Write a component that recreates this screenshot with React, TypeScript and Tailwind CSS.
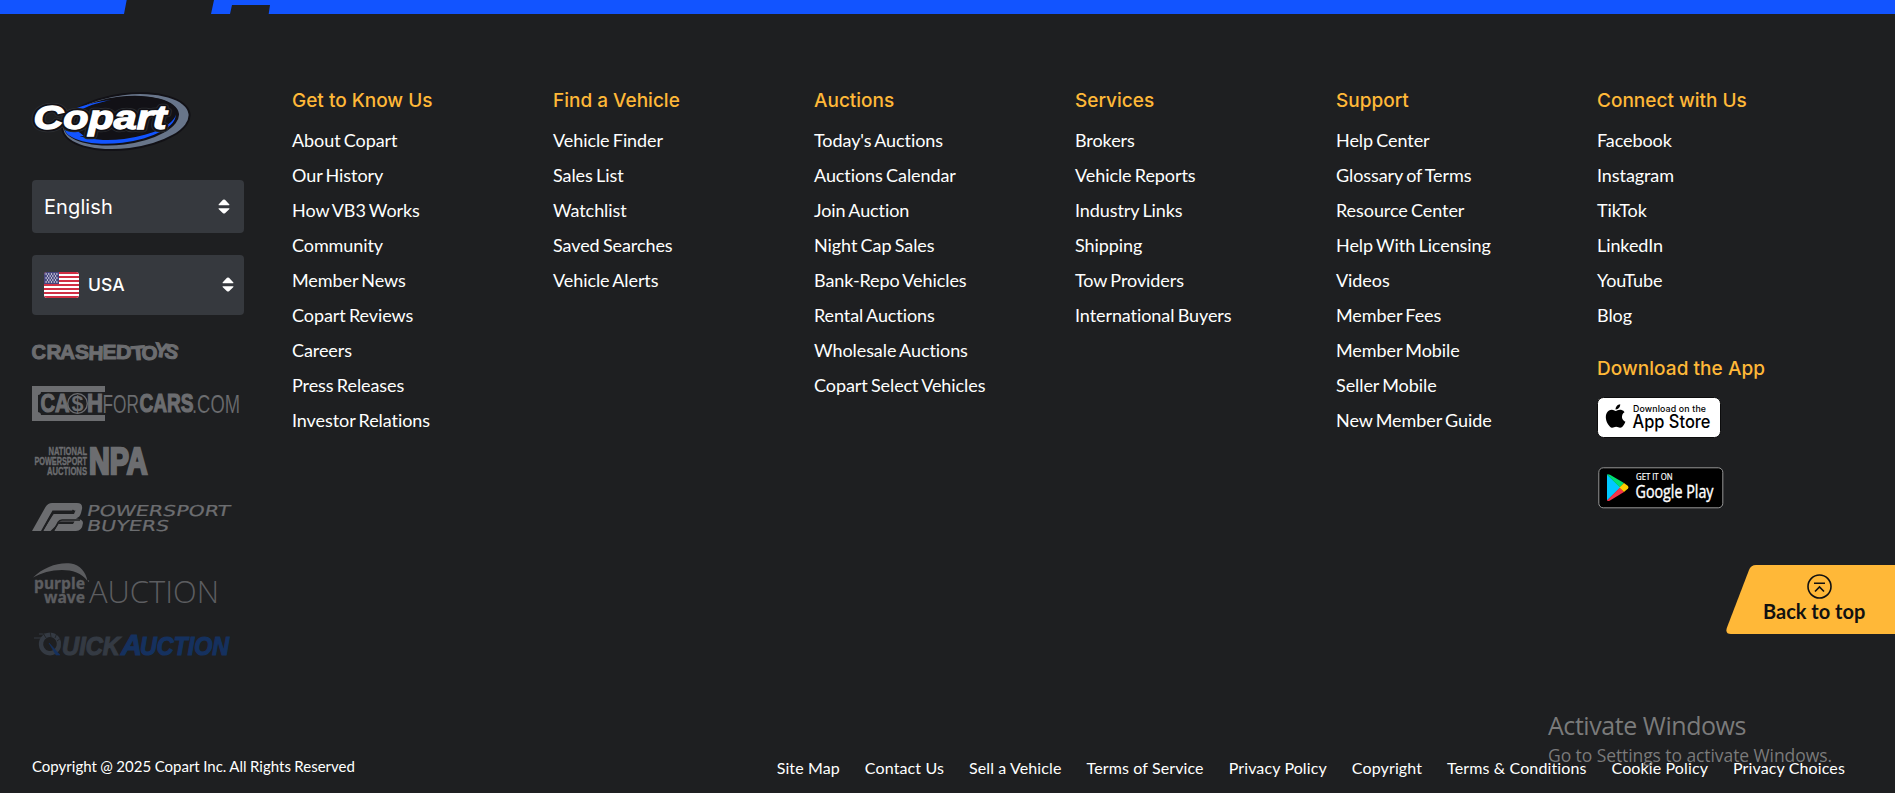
import React from "react";

type Column = { title: string; links: string[] };

const columns: Column[] = [
  {
    title: "Get to Know Us",
    links: ["About Copart", "Our History", "How VB3 Works", "Community", "Member News", "Copart Reviews", "Careers", "Press Releases", "Investor Relations"],
  },
  { title: "Find a Vehicle", links: ["Vehicle Finder", "Sales List", "Watchlist", "Saved Searches", "Vehicle Alerts"] },
  {
    title: "Auctions",
    links: ["Today's Auctions", "Auctions Calendar", "Join Auction", "Night Cap Sales", "Bank-Repo Vehicles", "Rental Auctions", "Wholesale Auctions", "Copart Select Vehicles"],
  },
  { title: "Services", links: ["Brokers", "Vehicle Reports", "Industry Links", "Shipping", "Tow Providers", "International Buyers"] },
  {
    title: "Support",
    links: ["Help Center", "Glossary of Terms", "Resource Center", "Help With Licensing", "Videos", "Member Fees", "Member Mobile", "Seller Mobile", "New Member Guide"],
  },
  { title: "Connect with Us", links: ["Facebook", "Instagram", "TikTok", "LinkedIn", "YouTube", "Blog"] },
];

const legal = ["Site Map", "Contact Us", "Sell a Vehicle", "Terms of Service", "Privacy Policy", "Copyright", "Terms & Conditions", "Cookie Policy", "Privacy Choices"];

const heading = "font-['Inter',sans-serif] text-[19px] leading-6 font-medium text-[#ffb838] whitespace-nowrap";

function CopartLogo() {
  return (
    <svg width="166" height="62" viewBox="30 90 166 62" className="-ml-0.5 block">
      <g transform="rotate(-7 127 121.5)">
        <ellipse cx="126" cy="121.5" rx="65" ry="28.6" fill="#121116" />
        <ellipse cx="126" cy="121.5" rx="63" ry="26.6" fill="#68758a" />
        <ellipse cx="121.5" cy="120" rx="58" ry="24" fill="#121116" />
        <ellipse cx="120" cy="120.5" rx="56" ry="21.5" fill="#1254ff" />
        <ellipse cx="122" cy="117.500" rx="55" ry="21" fill="#121116" />
      </g>
      <path d="M66 122C72 112 90 104 111 100C92 102 74 108 66 113L64 125L72 136L84 136Z" fill="#1254ff" />
      <g fontFamily="'Liberation Sans', sans-serif" fontWeight="700" fontStyle="italic" fontSize="34">
        <text x="33.5" y="129.3" textLength="133" lengthAdjust="spacingAndGlyphs" fill="#121116" stroke="#2b2d31" strokeWidth="6.5" strokeLinejoin="round">Copart</text>
        <text x="33.5" y="129.3" textLength="133" lengthAdjust="spacingAndGlyphs" fill="#121116" stroke="#121116" strokeWidth="5" strokeLinejoin="round" aria-hidden>Copart</text>
        <text x="33.5" y="129.3" textLength="133" lengthAdjust="spacingAndGlyphs" fill="#fff" stroke="#fff" strokeWidth="1.3" aria-hidden>Copart</text>
      </g>
    </svg>
  );
}

function Sorter() {
  return (
    <svg width="12" height="16" viewBox="0 0 12 16" fill="#fff">
      <path d="M1 6.2Q0 6.2 .8 5.2L5 .8Q6 0 7 .8L11.2 5.2Q12 6.2 11 6.2ZM1 9.2Q0 9.2 .8 10.2L5 14.2Q6 15 7 14.2L11.2 10.2Q12 9.2 11 9.2Z" />
    </svg>
  );
}

function Flag() {
  const stars: [number, number][] = [];
  for (let r = 0; r < 5; r++) for (let c = 0; c < 5 - (r % 2); c++) stars.push([2.1 + c * 2.7 + (r % 2) * 1.35, 2 + r * 2]);
  return (
    <svg width="35" height="26" viewBox="0 0 35 26" className="rounded-[3px]">
      <rect width="35" height="26" fill="#fff" />
      {[0, 1, 2, 3, 4, 5, 6].map((i) => (
        <rect key={i} y={i * 4} width="35" height="2" fill="#d02f44" />
      ))}
      <rect width="15" height="12" fill="#46467f" />
      {stars.map(([x, y], i) => (
        <circle key={i} cx={x} cy={y} r="0.7" fill="#fff" />
      ))}
    </svg>
  );
}

function CrashedToys() {
  const letters: [string, number, number, number, number][] = [
    ["C", 31.5, 359, 0, 14.5], ["R", 46.5, 359, 0, 15], ["A", 60, 359, 0, 15], ["S", 75, 359, 0, 14], ["H", 88.5, 360, 2, 15], ["E", 102.5, 358.5, 0, 14],
    ["D", 116, 359, 2, 15.5], ["T", 131, 360, -5, 14], ["O", 141.5, 360, 0, 16], ["Y", 154.5, 357, 8, 14], ["S", 165, 358.5, 12, 13.5],
  ];
  return (
    <svg width="150" height="22" viewBox="32 341 150 22" className="block overflow-visible" fill="#6c6d70" stroke="#6c6d70" strokeWidth="1" fontFamily="'Liberation Sans', sans-serif" fontWeight="700" fontSize="20">
      {letters.map(([ch, x, y, rot, w], i) => (
        <text key={i} x={x} y={y} textLength={w} lengthAdjust="spacingAndGlyphs" transform={`rotate(${rot} ${x + 7} ${y - 7})`}>{ch}</text>
      ))}
    </svg>
  );
}

function CashForCars() {
  return (
    <svg width="210" height="36" viewBox="32 386 210 36" className="block overflow-visible" fill="#6c6d70" fontFamily="'Liberation Sans', sans-serif">
      <path d="M32 386H105V392H41Q41 394.500 38 395V412Q41 412.500 41 415H105V421H32Z" />
      <g fontWeight="700" fontSize="26" stroke="#6c6d70" strokeWidth="1.2">
        <text x="40.500" y="412.300" textLength="29" lengthAdjust="spacingAndGlyphs">CA</text>
        <text x="87" y="412.300" textLength="16" lengthAdjust="spacingAndGlyphs">H</text>
        <text x="139.500" y="412.300" textLength="54" lengthAdjust="spacingAndGlyphs">CARS</text>
      </g>
      <circle cx="77.500" cy="403.500" r="9.800" fill="#1e1f21" stroke="#6c6d70" strokeWidth="1.300" />
      <text x="71.500" y="411" fontSize="21.500" fontWeight="700" textLength="12" lengthAdjust="spacingAndGlyphs">$</text>
      <g fontSize="26.500">
        <text x="102.500" y="412.500" textLength="36.500" lengthAdjust="spacingAndGlyphs" stroke="#1e1f21" strokeWidth=".2">FOR</text>
        <text x="192" y="412.500" textLength="48" lengthAdjust="spacingAndGlyphs" stroke="#1e1f21" strokeWidth=".2">.COM</text>
      </g>
    </svg>
  );
}

function Npa() {
  return (
    <svg width="120" height="30" viewBox="32 446 120 30" className="block overflow-visible" fill="#6c6d70" stroke="#6c6d70" strokeWidth=".4" fontFamily="'Liberation Sans', sans-serif" fontWeight="700">
      <g fontSize="11.500">
        <text x="48.500" y="455.400" textLength="38.500" lengthAdjust="spacingAndGlyphs">NATIONAL</text>
        <text x="34.500" y="465.300" textLength="52.500" lengthAdjust="spacingAndGlyphs">POWERSPORT</text>
        <text x="47" y="474.700" textLength="40" lengthAdjust="spacingAndGlyphs">AUCTIONS</text>
      </g>
      <text x="89" y="474" fontSize="37" strokeWidth="2.600" textLength="58.500" lengthAdjust="spacingAndGlyphs">NPA</text>
    </svg>
  );
}

function PowersportBuyers() {
  return (
    <svg width="202" height="30" viewBox="32 502 202 30" className="block overflow-visible" fill="#6c6d70">
      <path d="M32 531L45.500 507Q48 503 52 503H77Q83 503 82 509L81 513Q80 517 76 518.500Q83 519 83 523Q82 531 76 531H54L58.500 524H73L74.500 521.500H60L50.500 531H43L53.500 514H74L75.500 510.500H52.500L41 531Z" />
      <g fill="none" stroke="#1e1f21" strokeWidth="1.500">
        <path d="M42.500 531L51 515.500Q53 512.500 56 512.500H72L73.500 510M53.500 531L58 522.500Q59.500 520 62 520H80" />
      </g>
      <g fontFamily="'DejaVu Sans', sans-serif" fontSize="15" stroke="#6c6d70" strokeWidth=".2">
        <text transform="translate(86 516) skewX(-12)" textLength="143" lengthAdjust="spacingAndGlyphs">POWERSPORT</text>
        <text transform="translate(86 531) skewX(-12)" textLength="82" lengthAdjust="spacingAndGlyphs">BUYERS</text>
      </g>
    </svg>
  );
}

function PurpleWave() {
  return (
    <svg width="200" height="44" viewBox="32 561 200 44" className="block overflow-visible" fill="#5c5d60">
      <path d="M33 577.500C44 567 58 562 71 563.500C80 565 86 572 87.500 581C82 573 72 570 62 570C51 570 41 573 33 577.500Z" />
      <g fontFamily="'Noto Sans', sans-serif" fontWeight="700" fontSize="16" stroke="#5c5d60" strokeWidth=".3">
        <text x="34" y="588.500" textLength="51" lengthAdjust="spacingAndGlyphs">purple</text>
        <text x="44" y="602.500" textLength="41" lengthAdjust="spacingAndGlyphs">wave</text>
      </g>
      <circle cx="88.500" cy="581" r=".7" />
      <text x="89" y="602.500" fontFamily="'Open Sans', sans-serif" fontWeight="300" fontSize="31.500" textLength="130" lengthAdjust="spacingAndGlyphs">AUCTION</text>
    </svg>
  );
}

function QuickAuction() {
  return (
    <svg width="200" height="28" viewBox="32 630 200 28" className="block overflow-visible">
      <g fontFamily="'Liberation Sans', sans-serif" fontWeight="700" fontStyle="italic">
        <g fill="#343a43" stroke="#343a43" strokeWidth="1.2">
          <text x="62" y="654.500" fontSize="25" textLength="58" lengthAdjust="spacingAndGlyphs">UICK</text>
        </g>
        <g fill="#15315f" stroke="#15315f" strokeWidth="1.2">
          <text x="121" y="654.500" fontSize="29" textLength="21" lengthAdjust="spacingAndGlyphs">A</text>
          <text x="140" y="654.500" fontSize="25" textLength="89" lengthAdjust="spacingAndGlyphs">UCTION</text>
        </g>
      </g>
      <g fill="none" stroke="#343a43">
        <ellipse cx="50" cy="644" rx="9" ry="9.200" strokeWidth="4.400" transform="rotate(15 50 644)" />
        <path d="M34 638H42M39 634H47" strokeWidth="1" />
        <path d="M43 633L46 638M50 631L51 637M57 633L55 638M61 638L57 641" stroke="#1e1f21" strokeWidth=".8" />
      </g>
      <path d="M49 643L60 655L56 655Z" fill="#15315f" stroke="#15315f" strokeWidth=".6" />
    </svg>
  );
}

function AppStore() {
  return (
    <svg width="124" height="41" viewBox="0 0 124 41" className="block">
      <rect x=".5" y=".5" width="123" height="40" rx="6" fill="#fff" stroke="#0c0c0d" />
      <g transform="translate(4.700 2.800) scale(1.360)">
        <path d="M14.900 12.400c0-2.200 1.800-3.300 1.900-3.300-1-1.500-2.600-1.700-3.200-1.700-1.300-.1-2.600.8-3.300.8-.7 0-1.700-.8-2.800-.8C6 7.400 4.600 8.300 3.800 9.500c-1.600 2.700-.4 6.700 1.100 8.900.8 1.100 1.700 2.300 2.800 2.200 1.100 0 1.600-.7 2.900-.7 1.400 0 1.800.7 2.900.7 1.200 0 2-1.100 2.700-2.100.9-1.200 1.200-2.400 1.200-2.500-.1 0-2.500-1-2.500-3.600zM12.700 5.900c.6-.7 1-1.700.9-2.700-.8 0-1.900.6-2.500 1.300-.5.6-1 1.600-.9 2.600 1 .1 1.900-.5 2.500-1.200z" />
      </g>
      <g fontFamily="Inter, sans-serif" fill="#000">
        <text x="36" y="15" fontSize="8.800" fontWeight="500" textLength="73">Download on the</text>
        <text x="35.500" y="31.300" fontSize="18" fontWeight="500" textLength="78" lengthAdjust="spacingAndGlyphs">App Store</text>
      </g>
    </svg>
  );
}

function GooglePlay() {
  return (
    <svg width="126" height="42" viewBox="0 0 126 42" className="block">
      <rect x=".8" y=".8" width="124" height="40" rx="4.500" fill="#000" stroke="#a6a6a6" strokeWidth=".9" />
      <path d="M9 7.500L22.500 20.500L9 33.500Z" fill="#00c8ff" />
      <path d="M9 7.500Q10 7 12 7.800L26 16L22 20.500Z" fill="#00e071" />
      <path d="M9 33.500Q10 34.500 12 33.500L26 25L22 20.500Z" fill="#f5354a" />
      <path d="M26 16L30 19Q31 20.500 30 21.500L26 25L21.500 20.500Z" fill="#ffce00" />
      <g fill="#fff" fontFamily="'Open Sans', sans-serif">
        <text x="38" y="13.300" fontSize="8.400" textLength="36.500" lengthAdjust="spacingAndGlyphs" stroke="#fff" strokeWidth=".2">GET IT ON</text>
        <text x="37.500" y="31" fontSize="17.500" textLength="78" lengthAdjust="spacingAndGlyphs" stroke="#fff" strokeWidth=".4">Google Play</text>
      </g>
    </svg>
  );
}

export default function App() {
  return (
    <div className="relative flex h-[793px] w-full flex-col overflow-hidden bg-[#1e1f21] font-['Lato',sans-serif] text-white">
      <svg className="block h-[14px] w-full shrink-0 bg-[#1254ff]">
        <path d="M126.700 0H214L211 14H124ZM232 5H270L268.700 14H230Z" fill="#1e1f21" />
      </svg>

      <main className="flex h-[727px] pl-8">
        <aside className="flex w-[212px] shrink-0 flex-col pt-[76px]">
          <CopartLogo />
          <div className="mt-7 flex h-[53px] items-center justify-between rounded-[4px] bg-[#36393e] pr-[14px] pl-3">
            <span className="font-['Inter',sans-serif] text-[20px] tracking-[0.1px]">English</span>
            <Sorter />
          </div>
          <div className="mt-[22px] flex h-[60px] items-center rounded-[4px] bg-[#36393e] pr-[10px] pl-3">
            <Flag />
            <span className="ml-[9px] flex-1 font-['Inter',sans-serif] text-[17.5px] font-medium">USA</span>
            <Sorter />
          </div>
          <div className="mt-[26px]"><CrashedToys /></div>
          <div className="mt-[23px]"><CashForCars /></div>
          <div className="mt-6"><Npa /></div>
          <div className="mt-[26px]"><PowersportBuyers /></div>
          <div className="mt-[29px]"><PurpleWave /></div>
          <div className="mt-[25px]"><QuickAuction /></div>
        </aside>

        <nav className="ml-12 grid grid-cols-[repeat(6,261px)] pt-[75px]">
          {columns.map((c) => (
            <section key={c.title}>
              <h3 className={heading}>{c.title}</h3>
              <ul className="mt-[10px] text-[18px] tracking-[-0.08px] [font-variant-ligatures:none] [word-spacing:-1.2px]">
                {c.links.map((l) => (
                  <li key={l} className="h-[35px] leading-[35px] whitespace-nowrap">{l}</li>
                ))}
              </ul>
              {c.title === "Connect with Us" && (
                <div className="pt-[24px]">
                  <h3 className={`${heading} tracking-[0.05px]`}>Download the App</h3>
                  <div className="mt-4"><AppStore /></div>
                  <div className="mt-[29px] ml-px"><GooglePlay /></div>
                </div>
              )}
            </section>
          ))}
        </nav>
      </main>

      <footer className="flex h-[52px] items-start justify-between pr-[50px] pl-8 [font-variant-ligatures:none]">
        <p className="pt-[13px] text-[15px] leading-6 [word-spacing:-0.35px]">Copyright @ 2025 Copart Inc. All Rights Reserved</p>
        <ul className="flex gap-[25px] pt-[15px] text-[16px] leading-6 tracking-[0.12px]">
          {legal.map((l) => (
            <li key={l} className="whitespace-nowrap">{l}</li>
          ))}
        </ul>
      </footer>

      <button className="absolute top-[565px] right-0 h-[69px] w-[169px]">
        <svg width="169" height="69" viewBox="0 0 169 69" className="block">
          <path d="M169 0H30Q25 0 23 5L.8 63Q-1 69 5 69H169Z" fill="#ffb838" />
          <g fill="none" stroke="#111">
            <circle cx="93.500" cy="21.500" r="11.500" strokeWidth="1.600" />
            <path d="M88 18.300H99M89 26.500L93.500 22L98 26.500" strokeWidth="1.600" />
          </g>
        </svg>
        <span className="absolute top-[34px] left-[37px] text-[20px] leading-6 font-bold whitespace-nowrap text-[#111]">Back to top</span>
      </button>

      <div className="pointer-events-none absolute top-[707px] left-[1548px] font-['Open_Sans',sans-serif] whitespace-nowrap text-[#9a9a9a]/75">
        <div className="text-[25px] leading-[36px] tracking-[-0.45px]">Activate Windows</div>
        <div className="text-[17.5px] leading-[24px] tracking-[-0.08px]">Go to Settings to activate Windows.</div>
      </div>
    </div>
  );
}
